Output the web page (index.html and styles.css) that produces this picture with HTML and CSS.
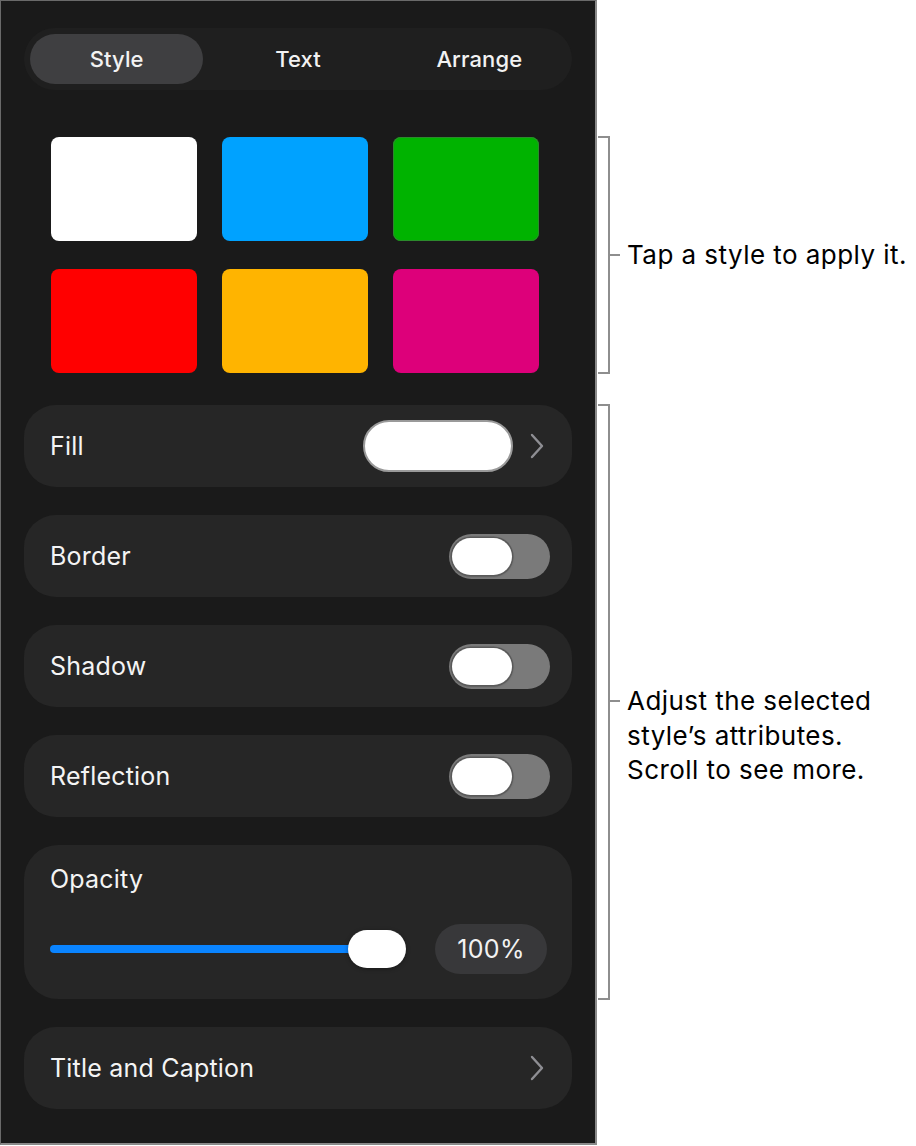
FILE: index.html
```html
<!DOCTYPE html>
<html lang="en">
<head>
<meta charset="utf-8">
<title>Style inspector</title>
<link rel="stylesheet" href="styles.css">
</head>
<body>
<div class="page">
  <div class="panel">
    <div class="segmented">
      <div class="seg seg-active">Style</div>
      <div class="seg">Text</div>
      <div class="seg">Arrange</div>
    </div>

    <div class="swatches">
      <div class="swatch sw-white"></div>
      <div class="swatch sw-blue"></div>
      <div class="swatch sw-green"></div>
      <div class="swatch sw-red"></div>
      <div class="swatch sw-orange"></div>
      <div class="swatch sw-magenta"></div>
    </div>

    <div class="rows">
      <div class="row row-fill">
        <span class="row-label">Fill</span>
        <div class="row-end">
          <div class="fill-well"></div>
          <svg class="chev" width="14" height="26" viewBox="0 0 14 26"><polyline points="2,2 12,13 2,24" fill="none" stroke="#8e8e93" stroke-width="2.4" stroke-linecap="round" stroke-linejoin="round"/></svg>
        </div>
      </div>

      <div class="row row-toggle">
        <span class="row-label">Border</span>
        <div class="toggle"><div class="knob"></div></div>
      </div>

      <div class="row row-toggle">
        <span class="row-label">Shadow</span>
        <div class="toggle"><div class="knob"></div></div>
      </div>

      <div class="row row-toggle">
        <span class="row-label">Reflection</span>
        <div class="toggle"><div class="knob"></div></div>
      </div>

      <div class="card">
        <div class="card-label">Opacity</div>
        <div class="slider-row">
          <div class="slider">
            <div class="slider-fill"></div>
            <div class="slider-knob"></div>
          </div>
          <div class="value-pill">100%</div>
        </div>
      </div>

      <div class="row row-fill">
        <span class="row-label">Title and Caption</span>
        <svg class="chev" width="14" height="26" viewBox="0 0 14 26"><polyline points="2,2 12,13 2,24" fill="none" stroke="#8e8e93" stroke-width="2.4" stroke-linecap="round" stroke-linejoin="round"/></svg>
      </div>
    </div>
  </div>

  <div class="notes">
    <div class="callout callout-styles">
      <div class="brace"></div>
      <div class="note note-center">Tap a style to apply it.</div>
    </div>
    <div class="callout callout-attrs">
      <div class="brace"></div>
      <div class="note note-top">Adjust the selected<br>style’s attributes.<br>Scroll to see more.</div>
    </div>
  </div>
</div>
</body>
</html>
```

FILE: styles.css
```css
* { box-sizing: border-box; }

html, body {
  margin: 0;
  padding: 0;
  background: #ffffff;
}

body {
  font-family: Inter, "Noto Sans", "Liberation Sans", sans-serif;
  width: 916px;
  height: 1146px;
  overflow: hidden;
}

.page {
  display: flex;
  align-items: flex-start;
}

/* ---------- panel ---------- */
.panel {
  width: 597px;
  height: 1145px;
  background: #1a1a1a;
  border-top: 1px solid #6a6a6a;
  border-left: 1px solid #6a6a6a;
  border-right: 2px solid #8a8a8a;
  border-bottom: 2px solid #8a8a8a;
  padding: 27px 23px 0 23px;
  flex-shrink: 0;
}

.segmented {
  height: 62px;
  background: #1f1f1f;
  border-radius: 31px;
  padding: 6px;
  display: grid;
  grid-template-columns: repeat(3, 1fr);
  column-gap: 8px;
}

.seg {
  display: flex;
  align-items: center;
  justify-content: center;
  border-radius: 25px;
  color: #f2f2f2;
  font-size: 22px;
  font-weight: 500;
  letter-spacing: 0.1px;
}

.seg-active {
  background: #3f3f41;
}

.swatches {
  margin: 47px 27px 0 27px;
  display: grid;
  grid-template-columns: repeat(3, 146px);
  grid-auto-rows: 104px;
  column-gap: 25px;
  row-gap: 28px;
}

.swatch {
  border-radius: 8px;
}
.sw-white   { background: #ffffff; }
.sw-blue    { background: #00a2ff; }
.sw-green   { background: #00b300; box-shadow: inset 0 0 0 1px #2c8a2c; }
.sw-red     { background: #ff0000; }
.sw-orange  { background: #ffb400; }
.sw-magenta { background: #dd007a; }

.rows {
  margin-top: 32px;
  display: flex;
  flex-direction: column;
  gap: 28px;
}

.row {
  height: 82px;
  background: #262626;
  border-radius: 32px;
  display: flex;
  align-items: center;
  justify-content: space-between;
  padding: 0 22px 0 26px;
}

.row-fill {
  padding-right: 28px;
}

.row-label {
  color: #f4f4f4;
  font-size: 25px;
  font-weight: 400;
  letter-spacing: 0.2px;
}

.row-end {
  display: flex;
  align-items: center;
  gap: 17px;
}

.fill-well {
  width: 150px;
  height: 52px;
  border-radius: 26px;
  background: #ffffff;
  border: 2px solid #9a9a9a;
}

.chev {
  display: block;
}

.toggle {
  width: 101px;
  height: 45px;
  border-radius: 23px;
  background: #7a7a7a;
  padding: 4px 3px;
  display: flex;
}

.knob {
  width: 60px;
  height: 37px;
  border-radius: 19px;
  background: #ffffff;
  box-shadow: 0 0 0 1.5px #5a5a5a, 0 1px 3px rgba(0,0,0,0.35);
}

/* opacity card */
.card {
  height: 154px;
  background: #262626;
  border-radius: 34px;
  padding: 19px 25px 0 26px;
  display: flex;
  flex-direction: column;
}

.card-label {
  color: #f4f4f4;
  font-size: 25px;
  line-height: 30px;
  letter-spacing: 0.2px;
}

.slider-row {
  margin-top: 30px;
  display: flex;
  align-items: center;
  gap: 29px;
}

.slider {
  flex: 1;
  display: flex;
  align-items: center;
  height: 50px;
}

.slider-fill {
  flex: 1;
  height: 8px;
  border-radius: 4px;
  background: #0a84ff;
  margin-right: -20px;
}

.slider-knob {
  width: 58px;
  height: 38px;
  border-radius: 19px;
  background: #ffffff;
  box-shadow: 0 1px 4px rgba(0,0,0,0.35);
}

.value-pill {
  width: 112px;
  height: 50px;
  border-radius: 25px;
  background: #38383a;
  color: #f2f2f2;
  font-size: 25px;
  letter-spacing: 0.3px;
  display: flex;
  align-items: center;
  justify-content: center;
}

/* ---------- callouts ---------- */
.notes {
  padding-top: 136px;
  padding-left: 1px;
  display: flex;
  flex-direction: column;
}

.callout {
  display: flex;
  align-items: stretch;
}

.callout-styles {
  height: 238px;
}

.callout-attrs {
  margin-top: 30px;
  height: 596px;
}

.brace {
  width: 12px;
  border-top: 2px solid #8e8e8e;
  border-right: 2px solid #8e8e8e;
  border-bottom: 2px solid #8e8e8e;
  flex-shrink: 0;
}

.note {
  color: #000000;
  font-size: 26px;
  line-height: 34.5px;
  letter-spacing: 0.45px;
  display: flex;
  align-items: center;
  position: relative;
  padding-left: 17px;
  white-space: nowrap;
}

.note::before {
  content: "";
  position: absolute;
  left: 0;
  width: 10px;
  height: 2px;
  background: #8e8e8e;
}

.note-center {
  align-self: center;
}
.note-center::before {
  top: 16px;
}

.note-top {
  align-self: flex-start;
  margin-top: 280px;
  display: block;
}
.note-top::before {
  top: 16px;
}
```
